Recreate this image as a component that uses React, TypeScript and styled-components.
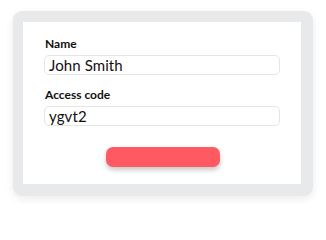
import styled, { createGlobalStyle } from "styled-components"

const GlobalStyle = createGlobalStyle`
	html, body {
		margin: 0;
		padding: 0;
		background: #ffffff;
	}
	body {
		font-family: Lato, "Noto Sans", "Liberation Sans", sans-serif;
		color: #111111;
	}
`

export default function App() {
	return (
		<>
			<GlobalStyle />
			<Page>
				<Frame>
					<Card>
						<Field>
							<Label>Name</Label>
							<Input>John Smith</Input>
						</Field>
						<Field>
							<Label>Access code</Label>
							<Input>ygvt2</Input>
						</Field>
						<Actions>
							<Button aria-label="Submit" />
						</Actions>
					</Card>
				</Frame>
			</Page>
		</>
	)
}

const Page = styled.div`
	width: 326px;
	height: 211px;
	padding: 11px 0 0 13px;
	box-sizing: border-box;
`

const Frame = styled.div`
	width: 300px;
	height: 185px;
	box-sizing: border-box;
	padding: 11px 12px 12px 10px;
	background: #e8e9ea;
	border-radius: 9px;
	box-shadow: 0 3px 8px rgba(0, 0, 0, 0.08);
`

const Card = styled.div`
	height: 100%;
	background: #ffffff;
	box-sizing: border-box;
	padding: 14px 21px 0 21px;
	display: flex;
	flex-direction: column;
	gap: 12px;
`

const Field = styled.div`
	display: flex;
	flex-direction: column;
	gap: 4px;
`

const Label = styled.span`
	font-size: 12px;
	line-height: 15px;
	font-weight: 700;
	color: #111111;
	padding-left: 1px;
`

const Input = styled.div`
	height: 20px;
	box-sizing: border-box;
	border: 1px solid #e5e5e5;
	border-radius: 5px;
	padding: 0 4px;
	font-size: 15px;
	line-height: 18px;
	letter-spacing: 0.1px;
	color: #111111;
	display: flex;
	align-items: center;
`

const Actions = styled.div`
	display: flex;
	justify-content: center;
	padding-top: 9px;
	padding-left: 2px;
`

const Button = styled.button`
	width: 114px;
	height: 20px;
	border: none;
	border-radius: 7px;
	background: #ff5a61;
	box-shadow: 0 3px 5px rgba(0, 0, 0, 0.22);
	cursor: pointer;
`
